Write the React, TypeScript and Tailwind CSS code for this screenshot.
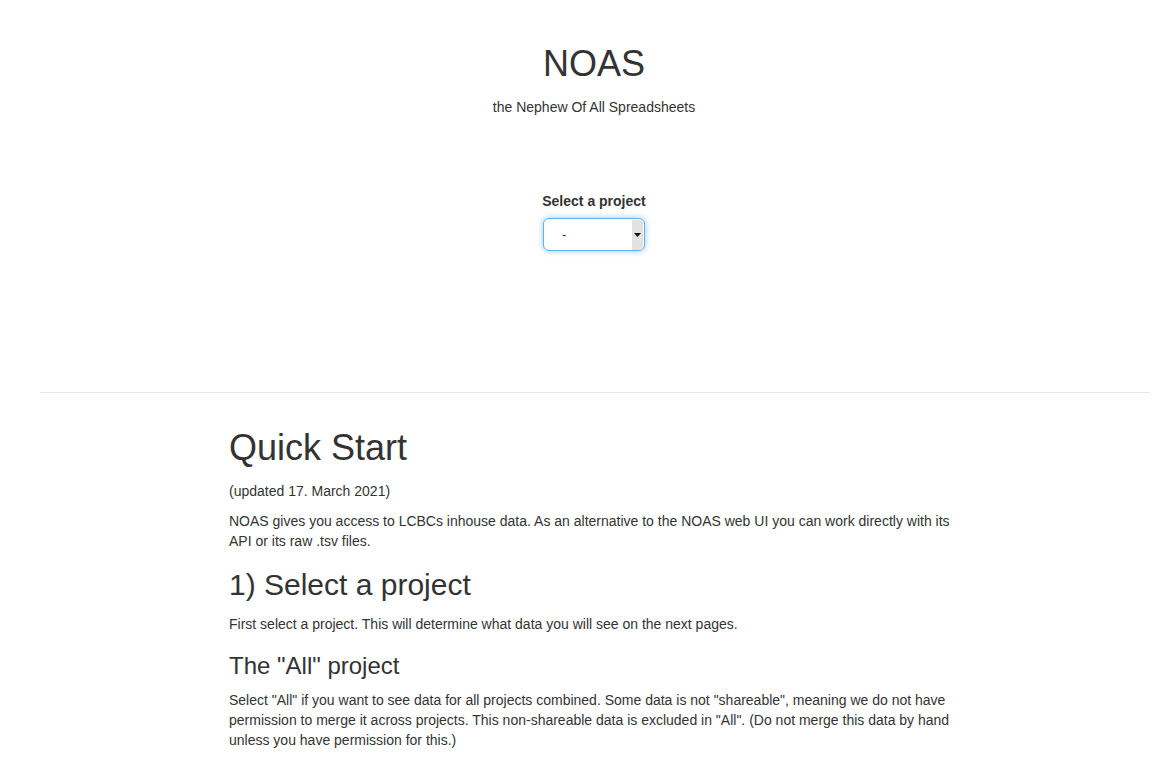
export default function App() {
  return (
    <div className="min-h-[765px] bg-white text-[#333] font-['Liberation_Sans',Arial,sans-serif] text-[14px] leading-[20px]">
      {/* Header */}
      <div className="ml-[40px] mr-[18px] flex flex-col items-center pt-[44px]">
        <h1 className="text-[36px] leading-[40px] font-normal">NOAS</h1>
        <p className="mt-[13px]">the Nephew Of All Spreadsheets</p>

        {/* Project picker */}
        <label className="mt-[74px] font-bold">Select a project</label>
        <div className="mt-[7px] flex h-[33px] w-[102px] items-center rounded-[6px] border border-[#66afe9] bg-white shadow-[0_0_6px_rgba(102,175,233,0.7)]">
          <span className="ml-[18px] flex-1 text-[13px]">-</span>
          <div className="mr-[1px] flex h-[30px] w-[11px] items-center justify-center rounded-r-[4px] bg-[#e2e2e2]">
            <svg width="7" height="4" viewBox="0 0 7 4">
              <path d="M0 0h7L3.5 4z" fill="#111" />
            </svg>
          </div>
        </div>
      </div>

      <hr className="ml-[40px] mr-[16px] mt-[141px] border-t border-[#e6e6e6]" />

      {/* Quick start */}
      <div className="ml-[229px] w-[725px] pb-[20px]">
        <h1 className="mt-[35px] text-[36px] leading-[40px] font-normal">Quick Start</h1>
        <p className="mt-[13px]">(updated 17. March 2021)</p>
        <p className="mt-[10px]">
          NOAS gives you access to LCBCs inhouse data. As an alternative to the NOAS web UI you can work directly with its API or its raw .tsv files.
        </p>

        <h2 className="mt-[17px] text-[30px] leading-[33px] font-normal">1) Select a project</h2>
        <p className="mt-[13px]">First select a project. This will determine what data you will see on the next pages.</p>

        <h3 className="mt-[18px] text-[24px] leading-[27px] font-normal">The "All" project</h3>
        <p className="mt-[11px]">
          Select "All" if you want to see data for all projects combined. Some data is not "shareable", meaning we do not have permission to merge it across projects. This non-shareable data is excluded in "All". (Do not merge this data by hand unless you have permission for this.)
        </p>
      </div>
    </div>
  );
}
